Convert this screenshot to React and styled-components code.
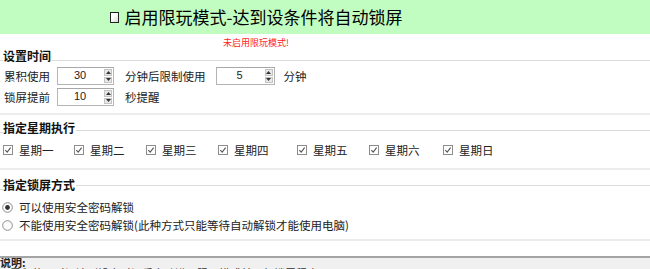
import React from "react";
import styled, { createGlobalStyle } from "styled-components";

const GlobalStyle = createGlobalStyle`
  html, body {
    margin: 0;
    padding: 0;
    background: #fff;
  }
  body {
    width: 650px;
    height: 269px;
    overflow: hidden;
    font-family: "Noto Sans CJK SC", "Liberation Sans", sans-serif;
    color: #222;
  }
`;

const DAYS = [
  { label: "星期一", width: 71 },
  { label: "星期二", width: 72 },
  { label: "星期三", width: 72 },
  { label: "星期四", width: 79 },
  { label: "星期五", width: 72 },
  { label: "星期六", width: 74 },
  { label: "星期日", width: 72 },
];

const CheckIcon = () => (
  <svg width="10" height="10" viewBox="0 0 10 10">
    <rect x="0.5" y="0.5" width="9" height="9" fill="#fff" stroke="#8c8c8c" />
    <path d="M2.3 5.1 L4.2 7.1 L7.6 2.7" fill="none" stroke="#555" strokeWidth="1.1" />
  </svg>
);

const RadioIcon = ({ checked }) => (
  <svg width="11" height="11" viewBox="0 0 11 11">
    <circle cx="5.5" cy="5.5" r="4.8" fill="#fff" stroke="#8a8a8a" />
    {checked && <circle cx="5.5" cy="5.5" r="2.4" fill="#333" />}
  </svg>
);

const SpinBox = ({ value, width, ml, mr }) => (
  <Spin $w={width} $ml={ml} $mr={mr}>
    <SpinValue>{value}</SpinValue>
    <SpinButtons>
      <SpinBtn>
        <svg width="5" height="3" viewBox="0 0 5 3">
          <path d="M0 3 L2.5 0 L5 3 Z" fill="#333" />
        </svg>
      </SpinBtn>
      <SpinBtn>
        <svg width="5" height="3" viewBox="0 0 5 3">
          <path d="M0 0 L2.5 3 L5 0 Z" fill="#333" />
        </svg>
      </SpinBtn>
    </SpinButtons>
  </Spin>
);

const App = () => {
  return (
    <>
      <GlobalStyle />
      <Header>
        <Centered>
          <HeaderBox />
          <HeaderTitle>启用限玩模式-达到设条件将自动锁屏</HeaderTitle>
        </Centered>
      </Header>
      <Status>
        <Centered>
          <StatusText>未启用限玩模式!</StatusText>
        </Centered>
      </Status>

      <Group $pb={7}>
        <TitleRow>
          <Lead />
          <Title>设置时间</Title>
          <Rule $mt={8} />
        </TitleRow>
        <Fields>
          <Row>
            <Label>累积使用</Label>
            <SpinBox value="30" width={57} ml={7} mr={11} />
            <Label>分钟后限制使用</Label>
            <SpinBox value="5" width={59} ml={10} mr={9} />
            <Label>分钟</Label>
          </Row>
          <Row>
            <Label>锁屏提前</Label>
            <SpinBox value="10" width={57} ml={7} mr={11} />
            <Label>秒提醒</Label>
          </Row>
        </Fields>
      </Group>

      <Group $mt={7} $pb={11}>
        <TitleRow>
          <Lead />
          <Title>指定星期执行</Title>
          <Rule $mt={4} />
        </TitleRow>
        <DaysRow>
          {DAYS.map((d) => (
            <Day key={d.label} style={{ width: d.width }}>
              <CheckIcon />
              <OptionText>{d.label}</OptionText>
            </Day>
          ))}
        </DaysRow>
      </Group>

      <Group $mt={9} $pb={7}>
        <TitleRow>
          <Lead />
          <Title>指定锁屏方式</Title>
          <Rule $mt={0} />
        </TitleRow>
        <Options>
          <Option>
            <RadioIcon checked />
            <OptionText>可以使用安全密码解锁</OptionText>
          </Option>
          <Option>
            <RadioIcon />
            <OptionText>不能使用安全密码解锁(此种方式只能等待自动解锁才能使用电脑)</OptionText>
          </Option>
        </Options>
      </Group>

      <Notes>
        <NoteTitle>说明:</NoteTitle>
        <NoteLine>累积使用时间达到设定时间后自动进入限玩模式并运行锁屏程序</NoteLine>
      </Notes>
    </>
  );
};

export default App;

const Header = styled.div`
  height: 34px;
  background: #c1fcc1;
`;

const Centered = styled.div`
  width: 512px;
  height: 100%;
  display: flex;
  align-items: center;
  justify-content: center;
`;

const HeaderBox = styled.span`
  width: 7px;
  height: 9px;
  border: 1px solid #222;
  background: linear-gradient(135deg, #fff 40%, #d8d8d8 100%);
  margin-right: 6px;
  margin-top: 1px;
`;

const HeaderTitle = styled.div`
  font-size: 17px;
  line-height: 34px;
  font-weight: 400;
  color: #000;
`;

const Status = styled.div`
  height: 16px;
`;

const StatusText = styled.div`
  font-size: 9px;
  line-height: 16px;
  color: #ff1a1a;
  padding-top: 2px;
`;

const Group = styled.div`
  margin-top: ${(p) => p.$mt || 0}px;
  padding-bottom: ${(p) => p.$pb}px;
  border-bottom: 2px solid #ececec;
`;

const TitleRow = styled.div`
  display: flex;
  align-items: center;
  height: 12px;
`;

const Lead = styled.div`
  width: 3px;
  height: 1px;
  background: #dcdcdc;
  margin-top: 8px;
`;

const Title = styled.div`
  font-size: 12px;
  line-height: 12px;
  font-weight: 700;
  color: #111;
  padding-right: 1px;
`;

const Rule = styled.div`
  flex: 1;
  height: 1px;
  background: #dcdcdc;
  margin-top: ${(p) => p.$mt}px;
`;

const Fields = styled.div`
  display: flex;
  flex-direction: column;
  gap: 3px;
  padding-top: 5px;
`;

const Row = styled.div`
  display: flex;
  align-items: center;
  height: 18px;
  padding-left: 4px;
`;

const Label = styled.span`
  font-size: 11.5px;
  color: #222;
  white-space: nowrap;
`;

const Spin = styled.div`
  width: ${(p) => p.$w}px;
  height: 18px;
  box-sizing: border-box;
  margin-left: ${(p) => p.$ml}px;
  margin-right: ${(p) => p.$mr}px;
  border: 1px solid #b4b4b4;
  border-top-color: #a8a8a8;
  background: #fff;
  display: flex;
  align-items: stretch;
`;

const SpinValue = styled.div`
  flex: 1;
  text-align: center;
  font-family: "Liberation Sans", sans-serif;
  font-size: 11px;
  line-height: 14px;
  color: #222;
  padding-right: 2px;
`;

const SpinButtons = styled.div`
  width: 8px;
  margin: 1px 1px 1px 0;
  display: flex;
  flex-direction: column;
  gap: 1px;
`;

const SpinBtn = styled.div`
  flex: 1;
  display: flex;
  align-items: center;
  justify-content: center;
  background: #e8e8e8;
  border: 1px solid #c4c4c4;
  box-sizing: border-box;
`;

const DaysRow = styled.div`
  display: flex;
  align-items: center;
  height: 14px;
  padding-top: 9px;
  padding-left: 3px;
`;

const Day = styled.div`
  display: flex;
  align-items: center;
  flex-shrink: 0;
`;

const OptionText = styled.span`
  font-size: 11.5px;
  color: #222;
  margin-left: 6px;
  white-space: nowrap;
`;

const Options = styled.div`
  display: flex;
  flex-direction: column;
  gap: 4px;
  padding-top: 9px;
  padding-left: 2px;
`;

const Option = styled.div`
  display: flex;
  align-items: center;
  height: 14px;
`;

const Notes = styled.div`
  margin-top: 15px;
  border-top: 2px solid #a4a4a4;
  background: #f0f0f0;
  height: 11px;
  overflow: hidden;
`;

const NoteTitle = styled.div`
  font-size: 11px;
  line-height: 9px;
  font-weight: 700;
  color: #222;
`;

const NoteLine = styled.div`
  font-size: 11px;
  line-height: 12px;
  color: #333;
  padding-left: 10px;
`;
